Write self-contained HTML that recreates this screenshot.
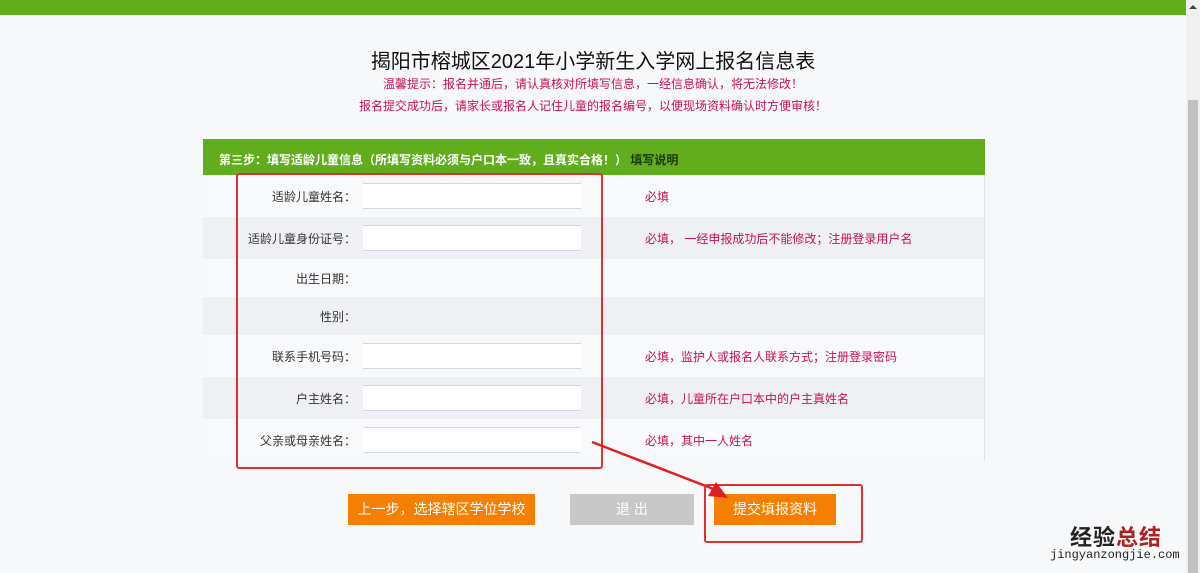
<!DOCTYPE html>
<html><head><meta charset="utf-8"><style>
*{margin:0;padding:0;box-sizing:border-box}
body{width:1200px;height:573px;overflow:hidden;background:#f7f8fa;font-family:"Liberation Sans","Noto Sans CJK SC",sans-serif;position:relative}
.nav{position:absolute;left:0;top:0;width:1186px;height:15px;background:#62ad1e}
.sb{position:absolute;left:1186px;top:0;width:14px;height:573px;background:#f0f0f0}
.thumb{position:absolute;left:1188px;top:100px;width:10px;height:473px;background:#c1c1c1}
.title{position:absolute;left:0;width:1186px;top:45px;text-align:center;font-size:20px;color:#111}
.tip{position:absolute;left:0;width:1186px;text-align:center;font-size:12px;color:#c8105a}
.tbl{position:absolute;left:203px;top:139px;width:782px}
.hd{height:36px;background:#62ad1e;color:#fff;font-size:12px;font-weight:bold;padding:12px 0 0 16px}
.hd span{color:#1d3a0a}
.row{height:42px;position:relative;border-right:1px solid #dde2ea;font-size:12px}
.row.s{height:38px}
.row:nth-child(odd){background:#f8f9fb}.row:nth-child(even){background:#eef0f4}
.lb{position:absolute;right:628px;top:50%;margin-top:-8px;color:#333}
.in{position:absolute;left:160px;top:8px;width:218px;height:26px;background:#fff;border-top:1px solid #d4d8e0;border-bottom:1px solid #d4d8e0}
.ht{position:absolute;left:442px;top:50%;margin-top:-8px;color:#c8105a}
.btn{position:absolute;top:494px;height:31px;color:#fff;font-size:14px;text-align:center;line-height:31px}
.rb{position:absolute;border:2px solid #e03030;border-radius:3px}
</style></head><body>
<div class="nav"></div>
<div class="sb"></div><div class="thumb"></div>
<div style="position:absolute;left:1189px;top:5px;width:0;height:0;border-left:4px solid transparent;border-right:4px solid transparent;border-bottom:4px solid #444"></div>
<div class="title">揭阳市榕城区2021年小学新生入学网上报名信息表</div>
<div class="tip" style="top:75px">温馨提示：报名并通后，请认真核对所填写信息，一经信息确认，将无法修改！</div>
<div class="tip" style="top:97px">报名提交成功后，请家长或报名人记住儿童的报名编号，以便现场资料确认时方便审核！</div>
<div class="tbl">
<div class="hd">第三步：填写适龄儿童信息（所填写资料必须与户口本一致，且真实合格！） <span>填写说明</span></div>
<div>
<div class="row"><span class="lb">适龄儿童姓名：</span><div class="in"></div><span class="ht">必填</span></div>
<div class="row"><span class="lb">适龄儿童身份证号：</span><div class="in"></div><span class="ht">必填，  一经申报成功后不能修改；注册登录用户名</span></div>
<div class="row s"><span class="lb">出生日期：</span></div>
<div class="row s"><span class="lb">性别：</span></div>
<div class="row"><span class="lb">联系手机号码：</span><div class="in"></div><span class="ht">必填，监护人或报名人联系方式；注册登录密码</span></div>
<div class="row"><span class="lb">户主姓名：</span><div class="in"></div><span class="ht">必填，儿童所在户口本中的户主真姓名</span></div>
<div class="row"><span class="lb">父亲或母亲姓名：</span><div class="in"></div><span class="ht">必填，其中一人姓名</span></div>
</div></div>
<div class="rb" style="left:236px;top:173px;width:367px;height:296px"></div>
<div class="btn" style="left:348px;width:187px;background:#f57f00">上一步，选择辖区学位学校</div>
<div class="btn" style="left:570px;width:124px;background:#c8c8c8">退 出</div>
<div class="btn" style="left:714px;width:122px;background:#f57f00">提交填报资料</div>
<div class="rb" style="left:704px;top:484px;width:159px;height:59px"></div>
<svg style="position:absolute;left:0;top:0" width="1200" height="573"><line x1="592" y1="442" x2="716" y2="490" stroke="#e02020" stroke-width="2.5"/><polygon points="728,498 708,496 716,482" fill="#e02020"/></svg>
<div style="position:absolute;left:1070px;top:520px;font-size:22px;font-weight:bold;color:#222;letter-spacing:1px">经验<span style="color:#b02020">总结</span></div>
<div style="position:absolute;left:1050px;top:548px;font-size:12px;color:#222;font-family:'Liberation Mono',monospace">jingyanzongjie.com</div>
</body></html>
